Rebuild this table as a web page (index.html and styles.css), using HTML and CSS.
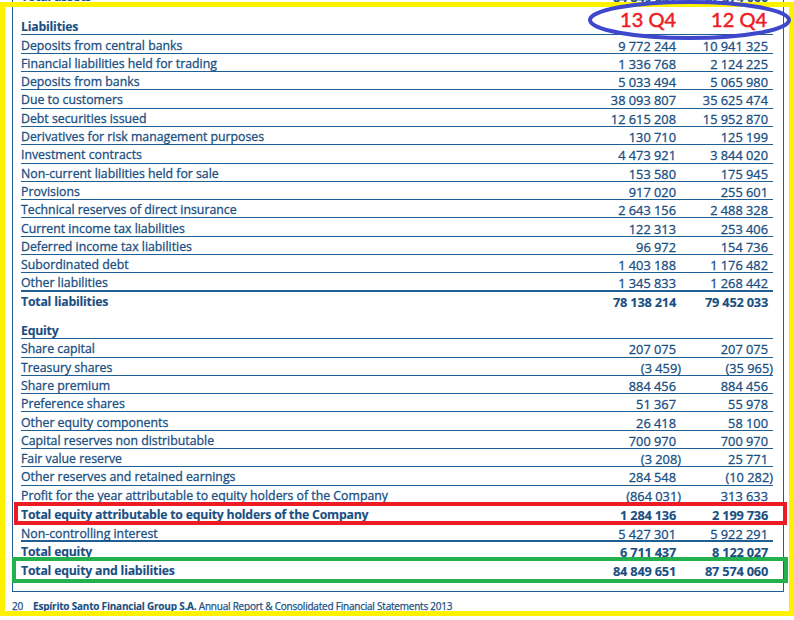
FILE: index.html
```html
<!DOCTYPE html>
<html>
<head>
<meta charset="utf-8">
<link rel="stylesheet" href="styles.css">
</head>
<body>
<div class="sheet">
  <div class="frame">
    <div class="row bold nob"><span>Total assets</span><span class="n">84 849 651</span><span class="n">87 574 060</span></div>
    <div class="row head"><span class="lbl bold">Liabilities</span><span class="q">13 Q4</span><span class="q q2">12 Q4</span></div>
    <div class="row"><span>Deposits from central banks</span><span class="n">9 772 244</span><span class="n">10 941 325</span></div>
    <div class="row"><span>Financial liabilities held for trading</span><span class="n">1 336 768</span><span class="n">2 124 225</span></div>
    <div class="row"><span>Deposits from banks</span><span class="n">5 033 494</span><span class="n">5 065 980</span></div>
    <div class="row"><span>Due to customers</span><span class="n">38 093 807</span><span class="n">35 625 474</span></div>
    <div class="row"><span>Debt securities issued</span><span class="n">12 615 208</span><span class="n">15 952 870</span></div>
    <div class="row"><span>Derivatives for risk management purposes</span><span class="n">130 710</span><span class="n">125 199</span></div>
    <div class="row"><span>Investment contracts</span><span class="n">4 473 921</span><span class="n">3 844 020</span></div>
    <div class="row"><span>Non-current liabilities held for sale</span><span class="n">153 580</span><span class="n">175 945</span></div>
    <div class="row"><span>Provisions</span><span class="n">917 020</span><span class="n">255 601</span></div>
    <div class="row"><span>Technical reserves of direct insurance</span><span class="n">2 643 156</span><span class="n">2 488 328</span></div>
    <div class="row"><span>Current income tax liabilities</span><span class="n">122 313</span><span class="n">253 406</span></div>
    <div class="row"><span>Deferred income tax liabilities</span><span class="n">96 972</span><span class="n">154 736</span></div>
    <div class="row"><span>Subordinated debt</span><span class="n">1 403 188</span><span class="n">1 176 482</span></div>
    <div class="row thick"><span>Other liabilities</span><span class="n">1 345 833</span><span class="n">1 268 442</span></div>
    <div class="row bold nob"><span>Total liabilities</span><span class="n">78 138 214</span><span class="n">79 452 033</span></div>

    <div class="row bold section"><span>Equity</span><span class="n"></span><span class="n"></span></div>
    <div class="row"><span>Share capital</span><span class="n">207 075</span><span class="n">207 075</span></div>
    <div class="row"><span>Treasury shares</span><span class="n"><span class="neg">(3 459)</span></span><span class="n"><span class="neg">(35 965)</span></span></div>
    <div class="row"><span>Share premium</span><span class="n">884 456</span><span class="n">884 456</span></div>
    <div class="row"><span>Preference shares</span><span class="n">51 367</span><span class="n">55 978</span></div>
    <div class="row"><span>Other equity components</span><span class="n">26 418</span><span class="n">58 100</span></div>
    <div class="row"><span>Capital reserves non distributable</span><span class="n">700 970</span><span class="n">700 970</span></div>
    <div class="row"><span>Fair value reserve</span><span class="n"><span class="neg">(3 208)</span></span><span class="n">25 771</span></div>
    <div class="row"><span>Other reserves and retained earnings</span><span class="n">284 548</span><span class="n"><span class="neg">(10 282)</span></span></div>
    <div class="row"><span>Profit for the year attributable to equity holders of the Company</span><span class="n"><span class="neg">(864 031)</span></span><span class="n">313 633</span></div>
    <div class="row bold tall"><span>Total equity attributable to equity holders of the Company</span><span class="n">1 284 136</span><span class="n">2 199 736</span></div>
    <div class="row thick"><span>Non-controlling interest</span><span class="n">5 427 301</span><span class="n">5 922 291</span></div>
    <div class="row bold"><span>Total equity</span><span class="n">6 711 437</span><span class="n">8 122 027</span></div>
    <div class="row bold nob"><span>Total equity and liabilities</span><span class="n">84 849 651</span><span class="n">87 574 060</span></div>
  </div>
  <div class="foot"><span class="pg">20</span><b>Espírito Santo Financial Group S.A.</b> Annual Report &amp; Consolidated Financial Statements 2013</div>

  <div class="mark yellow"></div>
  <div class="mark red"></div>
  <div class="mark green"></div>
  <svg class="ellipse" width="208" height="42" viewBox="0 0 208 42">
    <ellipse cx="103.5" cy="20" rx="99.5" ry="18" fill="none" stroke="#3f48cc" stroke-width="4"/>
  </svg>
</div>
</body>
</html>
```
FILE: styles.css
```css
body {
  margin: 0;
  background: #ffffff;
}

.sheet {
  position: relative;
  width: 794px;
  height: 620px;
  overflow: hidden;
  font-family: "Open Sans", "Liberation Sans", sans-serif;
  color: #1a4f82;
}

.frame {
  margin: -13px 0 0 12px;
  width: 772px;
  box-sizing: border-box;
  border: 1px solid #1f5f93;
  border-top: none;
  padding: 0 10px 12.1px 8px;
}

.row {
  display: grid;
  grid-template-columns: 1fr 100px 97px;
  height: 18.3px;
  box-sizing: border-box;
  border-bottom: 1px solid #1f5f93;
  padding-top: 3.1px;
  font-size: 12.3px;
  line-height: 14px;
  white-space: nowrap;
  -webkit-text-stroke: 0.3px #1a4f82;
}

.row .n {
  text-align: right;
  font-size: 12.8px;
}

.row .n:last-child {
  padding-right: 5px;
}

.neg {
  display: inline-block;
  margin-right: -5px;
}

.row.bold,
.lbl.bold {
  font-weight: 700;
  letter-spacing: -0.22px;
  -webkit-text-stroke: 0.1px #1a4f82;
}

.nob {
  border-bottom: none;
}

.thick {
  border-bottom-width: 2px;
}

.head {
  height: 30.2px;
  padding-top: 0;
  align-items: end;
}

.head .q {
  font-family: "Lato", "Open Sans", sans-serif;
  font-size: 20px;
  letter-spacing: 0;
  line-height: 20px;
  color: #ed1c24;
  -webkit-text-stroke: 0.5px #ed1c24;
  text-align: right;
  margin-bottom: 5.2px;
}

.head .q2 {
  padding-right: 6px;
}

.section {
  margin-top: 11px;
}

.tall {
  height: 20px;
  padding-top: 4.1px;
}

.foot {
  padding: 7.5px 0 0 12px;
  font-size: 10px;
  letter-spacing: -0.22px;
  line-height: 14px;
  white-space: nowrap;
  -webkit-text-stroke: 0.25px #1a4f82;
}

.foot b {
  font-weight: 700;
  -webkit-text-stroke: 0.1px #1a4f82;
}

.foot .pg {
  margin-right: 10px;
}

.mark {
  position: absolute;
  box-sizing: border-box;
}

.yellow {
  left: 0;
  top: 2px;
  width: 794px;
  height: 614px;
  border: 5px solid #fff200;
}

.red {
  left: 14px;
  top: 502px;
  width: 773px;
  height: 23px;
  border: 4px solid #ed1c24;
}

.green {
  left: 12px;
  top: 557px;
  width: 776px;
  height: 26px;
  border: 4px solid #22b14c;
}

.ellipse {
  position: absolute;
  left: 586px;
  top: 0;
}
```
